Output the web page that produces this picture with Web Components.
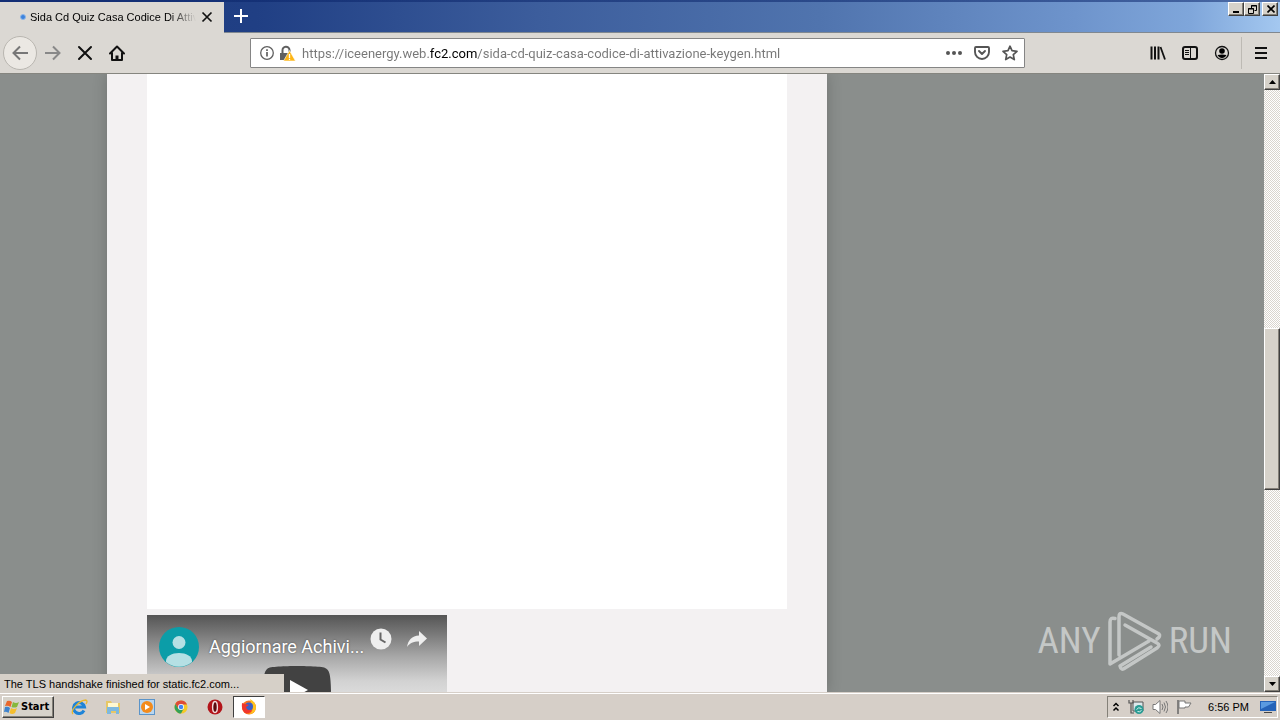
<!DOCTYPE html>
<html lang="en">
<head>
<meta charset="utf-8">
<title>Sida Cd Quiz Casa Codice Di Attivazione Keygen</title>
<style>
html, body { height: 100%; margin: 0; }
body { overflow: hidden; background: #d6cfc8; font: 11px/14px "Liberation Sans", "Noto Sans", sans-serif; color: #000; }
</style>
</head>
<body>
<desktop-screen></desktop-screen>

<script>
const define = (name, css, html) => {
  const tpl = document.createElement('template');
  tpl.innerHTML = `<style>*{box-sizing:border-box}:host{box-sizing:border-box}button{font:inherit;color:inherit;padding:0;margin:0}svg{display:block}${css}</style>${html}`;
  customElements.define(name, class extends HTMLElement {
    constructor() {
      super();
      this.attachShadow({ mode: 'open' }).append(tpl.content.cloneNode(true));
    }
  });
};

/* Raised classic button face shared by window, scroll bar and task bar buttons */
const raised = 'border:1px solid;border-color:#fff #404040 #404040 #fff;box-shadow:inset -1px -1px #848078;background:#d6d2ca;';

define('caption-button',
  `:host{display:block;width:16px;height:14px}
   button{width:100%;height:100%;display:grid;place-items:center;${raised}}`,
  `<button type="button"><slot></slot></button>`);

define('tool-button',
  `:host{display:block;width:32px;height:32px}
   :host([round]){width:34px;height:34px}
   button{width:100%;height:100%;border:0;background:none;display:grid;place-items:center}
   :host([round]) button{border:1px solid #b9b6b0;border-radius:50%;background:#ebe8e3}`,
  `<button type="button"><slot></slot></button>`);

define('browser-tab',
  `:host{display:flex;align-items:center;width:224px;height:31px;margin-top:2px;padding:0 10px 2px 20px;gap:4px;background:#dbd8d3}
   i{flex:none;width:6px;height:6px;border-radius:50%;background:#3c82dc;border:1px solid #8db6e8}
   .t{flex:1;min-width:0;overflow:hidden;white-space:nowrap;
      -webkit-mask-image:linear-gradient(90deg,#000 84%,transparent)}
   button{flex:none;border:0;background:none;width:14px;height:14px;display:grid;place-items:center}`,
  `<i></i><span class="t"><slot></slot></span>
   <button type="button" aria-label="Close tab"><svg width="12" height="12" viewBox="0 0 12 12"><path d="M1.500 1.500l9 9M10.500 1.500l-9 9" stroke="#111" stroke-width="1.700"/></svg></button>`);

define('title-bar',
  `:host{display:flex;height:33px;border-bottom:1px solid #808890;
     background:linear-gradient(#0a246a88 0 2px,transparent 2px),linear-gradient(90deg,#1d3a80 0,#203f84 20%,#3c5d9c 42%,#5074ae 64%,#6e94cc 84%,#7fa6da 93%,#a4c8f0)}
   .new{width:34px;height:32px;border:0;background:none;display:grid;place-items:center}
   .sp{flex:1}
   .win{display:flex;padding:2px 2px 0 0}
   .win :last-child{margin-left:2px}`,
  `<browser-tab>Sida Cd Quiz Casa Codice Di Attivazione</browser-tab>
   <button class="new" type="button" aria-label="New tab"><svg width="14" height="14" viewBox="0 0 14 14"><path d="M7 0v14M0 7h14" stroke="#fff" stroke-width="2"/></svg></button>
   <div class="sp"></div>
   <div class="win">
     <caption-button><svg width="10" height="8"><path d="M1 6h6v2H1z"/></svg></caption-button>
     <caption-button><svg width="10" height="9" fill="none" stroke="#000"><path d="M3.500 3V.5h5v5H6.500M3 1h6M.5 3.500h5v5h-5zM0 4h6"/></svg></caption-button>
     <caption-button><svg width="8" height="8" stroke="#000" stroke-width="1.600"><path d="M.5.5l7 7M7.500.5l-7 7"/></svg></caption-button>
   </div>`);

define('address-bar',
  `:host{display:flex;align-items:center;height:30px;border:1px solid #858585;border-radius:1px;background:#fff;padding:0 0 0 8px;--ink:#777}
   svg{flex:none}
   .lock{margin-left:4px}
   input{flex:1;min-width:0;height:26px;margin:0 8px 0 6px;padding:0;border:0;outline:0;
     font:13px/18px Roboto,sans-serif;color:transparent;
     background:linear-gradient(90deg,var(--ink) 128px,#000 128px 175px,var(--ink) 175px);-webkit-background-clip:text;background-clip:text}
   button{border:0;background:none;width:28px;height:26px;display:grid;place-items:center}`,
  `<svg width="16" height="16" viewBox="0 0 16 16" fill="none" stroke="#606060"><circle cx="8" cy="8" r="6.300" stroke-width="1.300"/><path d="M8 7v4.500M8 4.300V6" stroke-width="1.700"/></svg>
   <svg class="lock" width="17" height="17" viewBox="0 0 17 17"><path d="M3.500 8V5.500a3.500 3.500 0 0 1 7-.5v2" fill="none" stroke="#606060" stroke-width="2"/><path d="M1 8h11v7H1z" fill="#606060"/><path d="M10.500 5.500L16.500 16h-12z" fill="#fdb515" stroke="#fff" stroke-width=".6"/><path d="M10.500 9v4M10.500 13.800v1.200" stroke="#fff" stroke-width="1.300"/></svg>
   <input type="text" aria-label="Address" spellcheck="false" value="https://iceenergy.web.fc2.com/sida-cd-quiz-casa-codice-di-attivazione-keygen.html">
   <button type="button" aria-label="Page actions"><svg width="16" height="4" fill="#555"><circle cx="2" cy="2" r="2"/><circle cx="8" cy="2" r="2"/><circle cx="14" cy="2" r="2"/></svg></button>
   <button type="button" aria-label="Save to Pocket"><svg width="16" height="16" viewBox="0 0 16 16" fill="none" stroke="#555" stroke-width="1.900" stroke-linecap="round" stroke-linejoin="round"><path d="M2 2h12q1 0 1 1v4a7 7 0 0 1-14 0V3q0-1 1-1z"/><path d="M5 6l3 3 3-3"/></svg></button>
   <button type="button" aria-label="Bookmark"><svg width="16" height="16" viewBox="0 0 16 16" fill="none" stroke="#555" stroke-width="1.700" stroke-linejoin="round"><path d="M8 1.200l2 4.500 5 .6-3.700 3.300 1 5L8 12.100l-4.300 2.500 1-5L1 6.300l5-.6z"/></svg></button>`);

define('nav-bar',
  `:host{display:flex;align-items:center;height:41px;padding:0 3px;background:#dbd8d3;border-bottom:1px solid #85857f}
   .gap{flex:1 1 0;max-width:117px}
   address-bar{flex:1}
   hr{width:1px;height:32px;margin:0 3px;border:0;background:#bdbab4}`,
  `<tool-button round><svg width="16" height="16" viewBox="0 0 16 16" fill="none" stroke="#777" stroke-width="2"><path d="M16 8H1.500M8 1.500L1.500 8 8 14.500"/></svg></tool-button>
   <tool-button><svg width="16" height="16" viewBox="0 0 16 16" fill="none" stroke="#888" stroke-width="2"><path d="M0 8h14.500M8 1.500L14.500 8 8 14.500"/></svg></tool-button>
   <tool-button><svg width="16" height="16" viewBox="0 0 16 16" stroke="#111" stroke-width="2" stroke-linecap="round"><path d="M2 2l12 12M14 2L2 14"/></svg></tool-button>
   <tool-button><svg width="16" height="16" viewBox="0 0 16 16" fill="none" stroke="#111" stroke-width="2" stroke-linejoin="round" stroke-linecap="round"><path d="M1 8.500L8 1.500l7 7M3 8v7h10V8"/><path d="M6.500 15v-4.500h3V15z" stroke="none" fill="#111"/></svg></tool-button>
   <div class="gap"></div><address-bar></address-bar><div class="gap"></div>
   <tool-button><svg width="16" height="16" viewBox="0 0 16 16" fill="none" stroke="#111" stroke-width="2"><path d="M1.500 1.500v13M5 1.500v13M8.500 1.500v13"/><path d="M10.500 2L15 14.500" stroke-width="1.800"/></svg></tool-button>
   <tool-button><svg width="16" height="16" viewBox="0 0 16 16" fill="none" stroke="#111"><rect x="1" y="2" width="14" height="12" rx="2" stroke-width="2"/><path d="M8.500 2v12M3 5.500h4M3 7.500h4M3 9.500h4"/></svg></tool-button>
   <tool-button><svg width="16" height="16" viewBox="0 0 16 16"><circle cx="8" cy="8" r="6.500" fill="none" stroke="#111" stroke-width="1.300"/><circle cx="8" cy="6" r="2.800"/><path d="M3.500 10Q8 8.800 12.500 10 11 13 8 13T3.500 10z"/></svg></tool-button>
   <hr>
   <tool-button><svg width="14" height="14" stroke="#111" stroke-width="2"><path d="M1 2h12M1 7h12M1 12h12"/></svg></tool-button>`);

define('scroll-bar',
  `:host{display:flex;flex-direction:column;width:16px;background:repeating-conic-gradient(#fff 0 25%,#d9d5ce 0 50%) 0 0/2px 2px}
   button{flex:none;width:16px;height:16px;display:grid;place-items:center;${raised}}
   .before{flex:239}.after{flex:187}
   .thumb{flex:160;${raised}}`,
  `<button type="button" aria-label="Scroll up"><svg width="7" height="4"><path d="M3.500 0L7 4H0z"/></svg></button>
   <div class="before"></div><div class="thumb"></div><div class="after"></div>
   <button type="button" aria-label="Scroll down"><svg width="7" height="4"><path d="M0 0h7L3.500 4z"/></svg></button>`);

define('video-card',
  `:host{display:block;width:300px;height:150px;margin-top:6px;background:linear-gradient(#555 0,#777 18px,#a8a8a8 42px,#d2d2d2 66px,#e4e4e4 90px)}
   header{display:flex;align-items:center;padding:0 19px 0 12px;height:52px}
   .av{flex:none;margin-top:12px}
   a{flex:1;margin:12px 4px 0 10px;font:18px/24px Roboto,sans-serif;color:#fff;text-decoration:none;text-shadow:0 0 2px #0008;white-space:nowrap}
   .acts{display:flex;gap:14px;margin-bottom:4px}
   button{border:0;background:none}
   .play{display:block;margin:-1px auto 0}`,
  `<header>
     <svg class="av" width="40" height="40" viewBox="0 0 40 40"><circle cx="20" cy="20" r="20" fill="#0b9da8"/><circle cx="20" cy="15.500" r="6.500" fill="#b5e0e4"/><path d="M7 35v-1c0-5 6-8 13-8s13 3 13 8v1a20 20 0 0 1-26 0z" fill="#b5e0e4"/></svg>
     <a href="#video">Aggiornare Achivi...</a>
     <div class="acts">
       <button type="button" aria-label="Watch later"><svg width="22" height="22"><circle cx="11" cy="11" r="10.500" fill="#eee"/><path d="M10.500 4.500v7l5 3" fill="none" stroke="#666" stroke-width="2"/></svg></button>
       <button type="button" aria-label="Share"><svg width="22" height="22" viewBox="0 0 22 22"><path d="M13 3l8 7.500-8 7.500v-4.500C7 13.500 4 15 1 19c1-7 5-11 12-11.500z" fill="#eee"/></svg></button>
     </div>
   </header>
   <button class="play" type="button" aria-label="Play"><svg width="68" height="48" viewBox="0 0 68 48"><path d="M66.500 7.700c-.8-2.900-2.500-5.400-5.400-6.200C55.800.1 34 0 34 0S12.200.1 6.900 1.600C4 2.300 2.300 4.800 1.500 7.700.1 13 0 24 0 24s.1 11 1.500 16.300c.8 2.900 2.500 5.400 5.400 6.200C12.200 47.900 34 48 34 48s21.800-.1 27.100-1.600c2.900-.7 4.600-3.200 5.400-6.100C67.900 35 68 24 68 24s-.1-11-1.500-16.300z" fill="#424242"/><path d="M45 24L27 14v20" fill="#fff"/></svg></button>`);

define('web-page',
  `:host{display:block;overflow:hidden;background:#8a8e8c;padding-left:107px}
   article{width:720px;height:100%;padding:0 40px;background:#f3f1f2;box-shadow:0 0 14px #0003}
   .embed{height:535px;background:#fff}`,
  `<article><div class="embed"></div><video-card></video-card></article>`);

define('any-watermark',
  `:host{display:flex;align-items:center;gap:6px;color:#c4c7c6;font:37px/60px "Roboto Condensed","Liberation Sans Narrow",sans-serif}`,
  `<span>ANY</span>
   <svg width="56" height="62" viewBox="0 0 56 62" fill="none" stroke="#c4c7c6" stroke-width="3.500" stroke-linejoin="round" stroke-linecap="round"><path d="M8 8.500Q3 7 3 12V54L42 31M12 45V7q0-5 4-3L52 24q2 2-2 5M18 15L50 33q4 2 0 5L18 58q-4 3-5-2L44 37"/></svg>
   <span>RUN</span>`);

define('status-tip',
  `:host{display:block;width:284px;height:18px;padding:3px 4px 1px;background:#d6d0c8;white-space:nowrap;overflow:hidden}`,
  `<slot></slot>`);

define('task-button',
  `:host{display:block;width:32px;height:22px;margin-right:2px}
   button{width:100%;height:100%;border:0;background:none;display:grid;place-items:center}
   :host([active]) button{background:#fff;border:1px solid;border-color:#404040 #fff #fff #404040}`,
  `<button type="button"><slot></slot></button>`);

define('task-bar',
  `:host{display:flex;align-items:center;height:28px;padding:2px 2px 0;background:#d6cfc8;box-shadow:inset 0 1px #d6cfc8,inset 0 2px #fff}
   .start{display:flex;align-items:center;gap:1px;width:52px;height:22px;padding:0 2px 0 1px;margin-right:9px;font:bold 11px/14px "DejaVu Sans Condensed",sans-serif;${raised}}
   .sp{flex:1}
   .tray{display:flex;align-items:center;gap:8px;height:22px;padding:0 1px 0 4px;border:1px solid;border-color:#848078 #fff #fff #848078}
   time{margin:0 3px 0 8px}`,
  `<button class="start" type="button"><svg width="16" height="16" viewBox="0 0 16 16"><path d="M3 2q3-1 5 1L6.500 8Q4 6 1 7z" fill="#e9672c"/><path d="M9 3q3 2 6 0l-2 5q-3 1-5.500 0z" fill="#86b83b"/><path d="M1 8q3-1 5 1l-1.500 5Q2 12 0 13z" fill="#3f83cd"/><path d="M7 9q3 2 6 0l-2 5q-3 2-5.500 0z" fill="#f5be2d"/></svg><span>Start</span></button>
   <task-button><svg width="17" height="16" viewBox="0 0 17 16" fill="none"><path d="M13 11.500A5.500 5.500 0 1 1 13.500 8H4" stroke="#1e84d8" stroke-width="3"/><path d="M2 15C-1 12 8 1 15 1q2 1 0 4" stroke="#e9b82f" stroke-width="1.300"/></svg></task-button>
   <task-button><svg width="16" height="16" viewBox="0 0 16 16"><path d="M1 2h5l1 2h8v10H1z" fill="#e7c765"/><path d="M3 4h10v5H3z" fill="#fff8d0"/><path d="M2 8h12v7h-3v-3H6v3H2z" fill="#7db8df"/></svg></task-button>
   <task-button><svg width="16" height="16" viewBox="0 0 16 16"><rect x=".5" y=".5" width="15" height="15" fill="#b9d6ef" stroke="#5b94c9"/><circle cx="8" cy="8" r="6" fill="#f38b1c"/><path d="M6 5v6l5-3z" fill="#fff"/></svg></task-button>
   <task-button><svg width="14" height="14" viewBox="0 0 16 16"><circle cx="8" cy="8" r="7.500" fill="#f5c926"/><path d="M1.500 4.500A7.500 7.500 0 0 1 14.800 5H8L5 10z" fill="#dd4b39"/><path d="M1.500 4.500A7.500 7.500 0 0 0 8 15.500l3-5.500H5z" fill="#34a058"/><circle cx="8" cy="8" r="3.400" fill="#fff"/><circle cx="8" cy="8" r="2.600" fill="#4285f4"/></svg></task-button>
   <task-button><svg width="16" height="16" viewBox="0 0 16 16"><circle cx="8" cy="8" r="7.500" fill="#b3141a"/><ellipse cx="8" cy="8" rx="2.400" ry="5.500" fill="#5c0a0e" stroke="#f3dcdc" stroke-width="1.400"/></svg></task-button>
   <task-button active><svg width="16" height="16" viewBox="0 0 16 16"><circle cx="8" cy="8.500" r="7" fill="#f9741e"/><path d="M9 0q6 3 6 9-1 6-7 6 5-3 3-7z" fill="#ffc31f"/><circle cx="8" cy="7.500" r="4" fill="#3b5fc8"/><path d="M1 4l3 1 4 1-3 2q1 4 6 3-2 4-7 3-4-3-3-10z" fill="#f0362c"/></svg></task-button>
   <div class="sp"></div>
   <div class="tray">
     <svg width="8" height="10" fill="none" stroke="#000" stroke-width="1.500"><path d="M1.500 4L4 1.500 6.500 4M1.500 8.500L4 6l2.500 2.500"/></svg>
     <svg width="16" height="16" viewBox="0 0 16 16"><path d="M5 3h10v9H5z" fill="#dce9ec" stroke="#555"/><path d="M1 1v3h4V1M3 4v10h3" fill="none" stroke="#555" stroke-width="1.200"/><circle cx="11" cy="10.500" r="4.500" fill="#2a9c94"/><path d="M8.500 10.500q2-3 5-1M13.500 11.500q-2 2-4 1" fill="none" stroke="#d4f2ee"/></svg>
     <svg width="16" height="16" viewBox="0 0 16 16" fill="none" stroke="#777"><path d="M1 5.500h2.500L8 1.500v13l-4.500-4H1z" fill="#fff"/><path d="M10 5q2 3 0 6M12 3.500q3 4.500 0 9M14 2q4 6 0 12"/></svg>
     <svg width="16" height="16" viewBox="0 0 16 16"><path d="M2 1v14" stroke="#666" stroke-width="1.500"/><path d="M3 2h6v2h6l-2.500 4H9V9H3z" fill="#fff" stroke="#777"/></svg>
     <time>6:56 PM</time>
     <svg width="16" height="14" viewBox="0 0 16 14"><path d="M0 1h16v10H0z" fill="#2563b8"/><path d="M1 2h14L1 9z" fill="#5a9ae0"/><path d="M4 12h8v1H4z" fill="#444"/></svg>
   </div>`);

define('desktop-screen',
  `:host{display:flex;flex-direction:column;height:100vh}
   main{position:relative;flex:1;min-height:0;display:flex}
   web-page{flex:1;min-width:0}
   status-tip{position:absolute;left:0;bottom:0}
   any-watermark{position:absolute;right:48px;bottom:20px}`,
  `<title-bar></title-bar><nav-bar></nav-bar>
   <main><web-page></web-page><scroll-bar></scroll-bar>
     <status-tip>The TLS handshake finished for static.fc2.com...</status-tip>
     <any-watermark></any-watermark></main>
   <task-bar></task-bar>`);
</script>
</body>
</html>
